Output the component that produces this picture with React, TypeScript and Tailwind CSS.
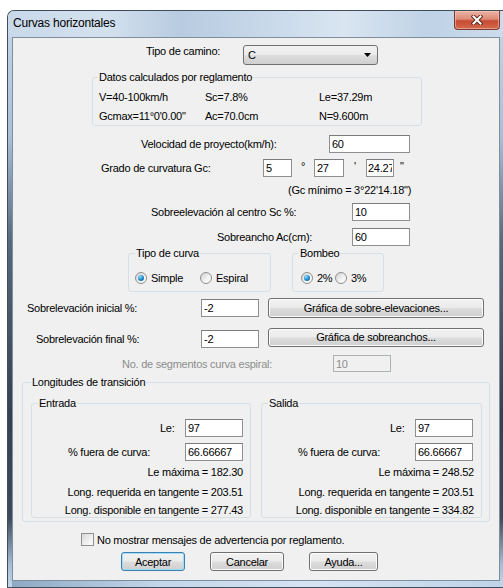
import type { ReactNode } from "react";

function GroupBox({
  title,
  className,
  children,
}: {
  title: string;
  className?: string;
  children: ReactNode;
}) {
  return (
    <fieldset className={`rounded-[3px] border border-[#d5dfe5] ${className ?? ""}`}>
      <legend className="px-[1px] leading-[14px]">{title}</legend>
      {children}
    </fieldset>
  );
}

function TextBox({
  value,
  className,
  disabled,
}: {
  value: string;
  className?: string;
  disabled?: boolean;
}) {
  return (
    <input
      readOnly
      disabled={disabled}
      defaultValue={value}
      className={`border px-[2px] text-[11px] leading-[14px] tracking-[-0.25px] outline-none ${
        disabled
          ? "border-[#adb2b5] bg-[#f0f0f0] text-[#8d8d8d]"
          : "border-[#8e8f92] border-t-[#7a7b7e] bg-white text-black"
      } ${className ?? ""}`}
    />
  );
}

function Button({
  label,
  className,
  primary,
}: {
  label: string;
  className?: string;
  primary?: boolean;
}) {
  return (
    <button
      className={`flex items-center justify-center rounded-[3px] border bg-[linear-gradient(180deg,#f2f2f2_0%,#ebebeb_48%,#dddddd_52%,#cfcfcf_100%)] text-[11px] leading-[14px] tracking-[-0.25px] ${
        primary
          ? "border-[#3c7fb1] shadow-[inset_0_0_0_1px_#9fdcf6]"
          : "border-[#707070] shadow-[inset_0_0_0_1px_#fcfcfc]"
      } ${className ?? ""}`}
    >
      {label}
    </button>
  );
}

function Radio({ label, checked }: { label: string; checked?: boolean }) {
  return (
    <div className="flex items-center">
      <span className="flex h-[12px] w-[12px] items-center justify-center rounded-full border border-[#8e8f8f] bg-[linear-gradient(135deg,#d2d2d2,#f4f4f4_60%,#ffffff)]">
        {checked && (
          <span className="h-[6px] w-[6px] rounded-full bg-[radial-gradient(circle_at_35%_30%,#8fdcff,#1a86c8_55%,#0b4f86)]" />
        )}
      </span>
      <span className="ml-[4px]">{label}</span>
    </div>
  );
}

function CloseGlyph() {
  return (
    <svg width="12" height="10" viewBox="0 0 12 10">
      <path d="M2.5 1.5 L9.5 8.5 M9.5 1.5 L2.5 8.5" stroke="#5a2a20" strokeWidth="4" strokeLinecap="square" />
      <path d="M2.5 1.5 L9.5 8.5 M9.5 1.5 L2.5 8.5" stroke="#ffffff" strokeWidth="2" strokeLinecap="square" />
    </svg>
  );
}

// Entrada / Salida boxes share the same layout
function TransitionBox({
  title,
  le,
  pct,
  max,
  required,
  available,
  className,
}: {
  title: string;
  le: string;
  pct: string;
  max: string;
  required: string;
  available: string;
  className?: string;
}) {
  return (
    <GroupBox title={title} className={`px-[6px] ${className ?? ""}`}>
      <div className="mt-[9px] flex h-[18px] items-center">
        <span className="ml-[122px] w-[25px]">Le:</span>
        <TextBox value={le} className="h-[18px] w-[58px]" />
      </div>
      <div className="mt-[6px] flex h-[18px] items-center">
        <span className="ml-[30px] w-[117px]">% fuera de curva:</span>
        <TextBox value={pct} className="h-[18px] w-[58px]" />
      </div>
      <div className="mt-[4px] pr-[1px] text-right">Le máxima = {max}</div>
      <div className="mt-[6px] pr-[1px] text-right">Long. requerida en tangente = {required}</div>
      <div className="mt-[4px] pr-[1px] text-right">Long. disponible en tangente = {available}</div>
    </GroupBox>
  );
}

export default function App() {
  return (
    <div className="h-[588px] w-[503px] overflow-hidden bg-white font-['Liberation_Sans',Arial,sans-serif] text-[11px] leading-[14px] text-black">
      <div className="ml-[7px] mt-[10px] flex h-[578px] w-[496px] flex-col overflow-hidden rounded-tl-[7px] border border-r-0 border-[#3f4d5c] bg-[linear-gradient(180deg,#c6d8ea_0%,#a8bfd7_22%,#56697e_40%,#34424f_70%,#3c4b5b_88%,#a4bcd4_96%,#c4d7ea_100%)]">
        {/* title bar */}
        <div className="flex h-[26px] shrink-0 items-start justify-between bg-[linear-gradient(90deg,#c9d9ea_0%,#d3e0ee_20%,#b8cbe0_35%,#c6d7e9_50%,#d9e5f1_68%,#bfd2e6_85%,#ccdcec_100%)]">
          <span className="ml-[5px] mt-[5px] text-[12px] leading-[14px] tracking-[-0.2px] text-black">
            Curvas horizontales
          </span>
          <div className="mr-[3px] flex h-[19px] w-[46px] items-center justify-center rounded-b-[4px] border border-t-0 border-[#7a3b30] bg-[linear-gradient(180deg,#ebb3a4_0%,#dd8c78_45%,#c94a33_55%,#d2694d_100%)] shadow-[inset_0_0_0_1px_rgba(255,210,200,0.5)]">
            <CloseGlyph />
          </div>
        </div>

        <div className="flex">
          <div className="w-[4px] shrink-0" />
          {/* client area */}
          <div className="flex h-[544px] w-[488px] shrink-0 flex-col border border-[#7f8e9d] bg-[#f0f0f0] tracking-[-0.25px]">
            <div className="mt-[7px] flex h-[20px] items-start">
              <span className="-mt-[1px] ml-[133px] w-[97px]">Tipo de camino:</span>
              <div className="flex h-[20px] w-[135px] items-center justify-between rounded-[3px] border border-[#707070] bg-[linear-gradient(180deg,#f2f2f2_0%,#ebebeb_48%,#dddddd_52%,#cfcfcf_100%)] pl-[4px] pr-[6px]">
                <span>C</span>
                <svg width="7" height="4" viewBox="0 0 7 4">
                  <path d="M0 0 H7 L3.5 4 Z" fill="#000" />
                </svg>
              </div>
            </div>

            <GroupBox title="Datos calculados por reglamento" className="ml-[79px] mt-[5px] w-[330px] px-[5px] pb-[2px]">
              <div className="grid grid-cols-[106px_114px_1fr] gap-y-[5px] pl-[1px] pt-[6px]">
                <span>V=40-100km/h</span>
                <span>Sc=7.8%</span>
                <span>Le=37.29m</span>
                <span>Gcmax=11°0'0.00"</span>
                <span>Ac=70.0cm</span>
                <span>N=9.600m</span>
              </div>
            </GroupBox>

            <div className="mt-[9px] flex h-[18px] items-center">
              <span className="ml-[128px] w-[188px]">Velocidad de proyecto(km/h):</span>
              <TextBox value="60" className="h-[18px] w-[81px]" />
            </div>

            <div className="mt-[6px] flex h-[18px] items-center">
              <span className="ml-[88px] w-[162px]">Grado de curvatura Gc:</span>
              <TextBox value="5" className="h-[18px] w-[29px]" />
              <span className="w-[22px] self-start text-center">°</span>
              <TextBox value="27" className="h-[18px] w-[30px]" />
              <span className="w-[22px] self-start text-center">'</span>
              <TextBox value="24.27" className="h-[18px] w-[28px] !px-[1px]" />
              <span className="ml-[6px] self-start">"</span>
            </div>

            <div className="ml-[275px] mt-[6px]">(Gc mínimo = 3°22'14.18")</div>

            <div className="mt-[6px] flex h-[18px] items-center">
              <span className="ml-[138px] w-[201px]">Sobreelevación al centro Sc %:</span>
              <TextBox value="10" className="h-[18px] w-[58px]" />
            </div>

            <div className="mt-[7px] flex h-[18px] items-center">
              <span className="ml-[204px] w-[135px]">Sobreancho Ac(cm):</span>
              <TextBox value="60" className="h-[18px] w-[58px]" />
            </div>

            <div className="ml-[115px] flex items-start">
              <GroupBox title="Tipo de curva" className="w-[143px] px-[6px] pb-[6px]">
                <div className="mt-[11px] flex h-[14px] items-center">
                  <div className="w-[65px]">
                    <Radio label="Simple" checked />
                  </div>
                  <Radio label="Espiral" />
                </div>
              </GroupBox>
              <GroupBox title="Bombeo" className="ml-[21px] w-[92px] px-[6px] pb-[6px]">
                <div className="mt-[11px] flex h-[14px] items-center pl-[2px]">
                  <div className="w-[34px]">
                    <Radio label="2%" checked />
                  </div>
                  <Radio label="3%" />
                </div>
              </GroupBox>
            </div>

            <div className="mt-[6px] flex h-[20px] items-center">
              <span className="ml-[14px] w-[174px]">Sobrelevación inicial %:</span>
              <TextBox value="-2" className="h-[18px] w-[58px]" />
              <Button label="Gráfica de sobre-elevaciones..." className="ml-[9px] h-[20px] w-[216px]" />
            </div>

            <div className="mt-[9px] flex h-[20px] items-center">
              <span className="ml-[23px] mt-[4px] w-[165px]">Sobrelevación final %:</span>
              <TextBox value="-2" className="mt-[4px] h-[18px] w-[58px]" />
              <Button label="Gráfica de sobreanchos..." className="ml-[9px] h-[19px] w-[216px]" />
            </div>

            <div className="mt-[8px] flex h-[17px] items-center">
              <span className="ml-[109px] w-[211px] text-[#8d8d8d]">No. de segmentos curva espiral:</span>
              <TextBox value="10" disabled className="h-[17px] w-[58px]" />
            </div>

            <GroupBox title="Longitudes de transición" className="ml-[9px] mt-[3px] w-[468px] pb-[3px] pl-[8px] pr-[7px]">
              <div className="mt-[7px] flex gap-[10px]">
                <TransitionBox
                  title="Entrada"
                  le="97"
                  pct="66.66667"
                  max="182.30"
                  required="203.51"
                  available="277.43"
                  className="w-[220px]"
                />
                <TransitionBox
                  title="Salida"
                  le="97"
                  pct="66.66667"
                  max="248.52"
                  required="203.51"
                  available="334.82"
                  className="w-[221px]"
                />
              </div>
            </GroupBox>

            <div className="ml-[68px] mt-[11px] flex h-[13px] items-center">
              <span className="h-[13px] w-[13px] border border-[#8e8f8f] bg-[linear-gradient(135deg,#d6d6d6,#f1f1f1_60%,#fcfcfc)]" />
              <span className="ml-[3px]">No mostrar mensajes de advertencia por reglamento.</span>
            </div>

            <div className="mt-[6px] flex">
              <Button label="Aceptar" primary className="ml-[108px] h-[19px] w-[64px]" />
              <Button label="Cancelar" className="ml-[25px] h-[19px] w-[74px]" />
              <Button label="Ayuda..." className="ml-[25px] h-[19px] w-[69px]" />
            </div>
          </div>
        </div>

        {/* bottom edge of the frame */}
        <div className="ml-[4px] flex-1 bg-[linear-gradient(90deg,#8ea9c4_0%,#c3d6ea_30%,#d6e4f2_60%,#bfd3e8_100%)]" />
      </div>
    </div>
  );
}
